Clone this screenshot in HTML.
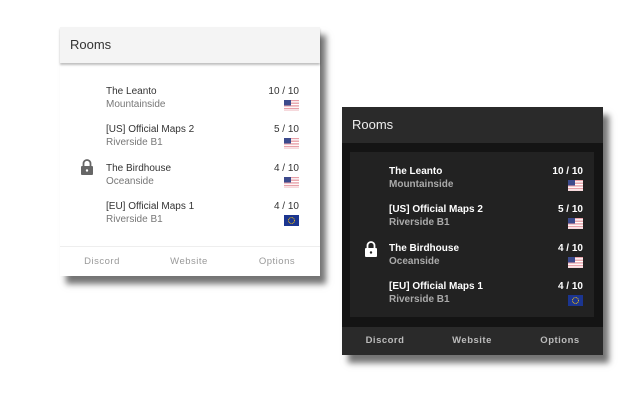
<!DOCTYPE html>
<html><head><style>
*{margin:0;padding:0;box-sizing:border-box}
body{width:640px;height:400px;background:#fff;position:relative;overflow:hidden;font-family:"Liberation Sans Narrow","Liberation Sans",sans-serif}
.card{position:absolute;box-shadow:6px 8px 6px rgba(0,0,0,.55)}
.hdr{position:absolute;left:0;right:0;top:0;height:36px;font-size:13px;line-height:36px;padding-left:10px}
.row{position:absolute;height:32px}
.nm{position:absolute;left:0;top:0;font-size:10px;white-space:nowrap}
.sb{position:absolute;left:0;top:13px;font-size:10px;white-space:nowrap}
.ct{position:absolute;right:0;top:0;font-size:10px;white-space:nowrap}
.fl{position:absolute;right:0;top:14px;width:15px;height:11px}
.ft{position:absolute;left:0;right:0;bottom:0;height:30px;font-size:9.5px;letter-spacing:.5px;line-height:30px}
.ft span{position:absolute;transform:translateX(-50%)}
</style></head><body>
<svg width="0" height="0" style="position:absolute"><defs>
<g id="us"><rect width="15" height="11" fill="#e8a0a8"/><rect y="1.2" width="15" height="1.3" fill="#fff"/><rect y="3.9" width="15" height="1.3" fill="#fff"/><rect y="6.6" width="15" height="1.3" fill="#fff"/><rect y="9.3" width="15" height="1.3" fill="#fff"/><rect width="7" height="5.5" fill="#3c4a8c"/></g>
<g id="eu"><rect width="15" height="11" fill="#1b3590"/><circle cx="7.5" cy="5.5" r="3" fill="none" stroke="#d8b020" stroke-width="1" stroke-dasharray="1 .6"/></g>
</defs></svg>

<div class="card" style="left:60px;top:27px;width:260px;height:249px;background:#fff">
 <div class="hdr" style="background:#f4f4f4;color:#333;box-shadow:0 2px 2px rgba(0,0,0,.25)">Rooms</div>
 <div style="position:absolute;left:20px;top:132px;width:14px;height:16px">
  <svg width="14" height="16" viewBox="0 0 14 16"><path d="M3.5 7V4.5a3.5 3.5 0 0 1 7 0V7" fill="none" stroke="#666" stroke-width="1.8"/><rect x="1" y="7" width="12" height="9" rx="1" fill="#666"/><circle cx="7" cy="11.5" r="1.2" fill="#fff"/></svg>
 </div>
 <div class="row" style="left:46px;top:59px;width:193px"><div class="nm" style="color:#333">The Leanto</div><div class="sb" style="color:#777">Mountainside</div><div class="ct" style="color:#333">10 / 10</div><svg class="fl"><use href="#us"/></svg></div>
 <div class="row" style="left:46px;top:97px;width:193px"><div class="nm" style="color:#333">[US] Official Maps 2</div><div class="sb" style="color:#777">Riverside B1</div><div class="ct" style="color:#333">5 / 10</div><svg class="fl"><use href="#us"/></svg></div>
 <div class="row" style="left:46px;top:136px;width:193px"><div class="nm" style="color:#333">The Birdhouse</div><div class="sb" style="color:#777">Oceanside</div><div class="ct" style="color:#333">4 / 10</div><svg class="fl"><use href="#us"/></svg></div>
 <div class="row" style="left:46px;top:174px;width:193px"><div class="nm" style="color:#333">[EU] Official Maps 1</div><div class="sb" style="color:#777">Riverside B1</div><div class="ct" style="color:#333">4 / 10</div><svg class="fl"><use href="#eu"/></svg></div>
 <div class="ft" style="border-top:1px solid #eee;color:#999"><span style="left:42px">Discord</span><span style="left:129px">Website</span><span style="left:217px">Options</span></div>
</div>

<div class="card" style="left:342px;top:107px;width:261px;height:248px;background:#141414">
 <div class="hdr" style="background:#2a2a2a;color:#eee">Rooms</div>
 <div style="position:absolute;left:8px;top:45px;width:244px;height:165px;background:#222"></div>
 <div style="position:absolute;left:22px;top:134px;width:14px;height:16px">
  <svg width="14" height="16" viewBox="0 0 14 16"><path d="M3.5 7V4.5a3.5 3.5 0 0 1 7 0V7" fill="none" stroke="#fff" stroke-width="1.8"/><rect x="1" y="7" width="12" height="9" rx="1" fill="#fff"/><circle cx="7" cy="11.5" r="1.2" fill="#222"/></svg>
 </div>
 <div class="row" style="left:47px;top:59px;width:194px"><div class="nm" style="color:#fff;font-weight:bold">The Leanto</div><div class="sb" style="color:#aaa;font-weight:bold">Mountainside</div><div class="ct" style="color:#fff;font-weight:bold">10 / 10</div><svg class="fl"><use href="#us"/></svg></div>
 <div class="row" style="left:47px;top:97px;width:194px"><div class="nm" style="color:#fff;font-weight:bold">[US] Official Maps 2</div><div class="sb" style="color:#aaa;font-weight:bold">Riverside B1</div><div class="ct" style="color:#fff;font-weight:bold">5 / 10</div><svg class="fl"><use href="#us"/></svg></div>
 <div class="row" style="left:47px;top:136px;width:194px"><div class="nm" style="color:#fff;font-weight:bold">The Birdhouse</div><div class="sb" style="color:#aaa;font-weight:bold">Oceanside</div><div class="ct" style="color:#fff;font-weight:bold">4 / 10</div><svg class="fl"><use href="#us"/></svg></div>
 <div class="row" style="left:47px;top:174px;width:194px"><div class="nm" style="color:#fff;font-weight:bold">[EU] Official Maps 1</div><div class="sb" style="color:#aaa;font-weight:bold">Riverside B1</div><div class="ct" style="color:#fff;font-weight:bold">4 / 10</div><svg class="fl"><use href="#eu"/></svg></div>
 <div class="ft" style="background:#2a2a2a;color:#bbb;font-weight:bold;height:28px;line-height:28px"><span style="left:43px">Discord</span><span style="left:130px">Website</span><span style="left:218px">Options</span></div>
</div>
</body></html>
